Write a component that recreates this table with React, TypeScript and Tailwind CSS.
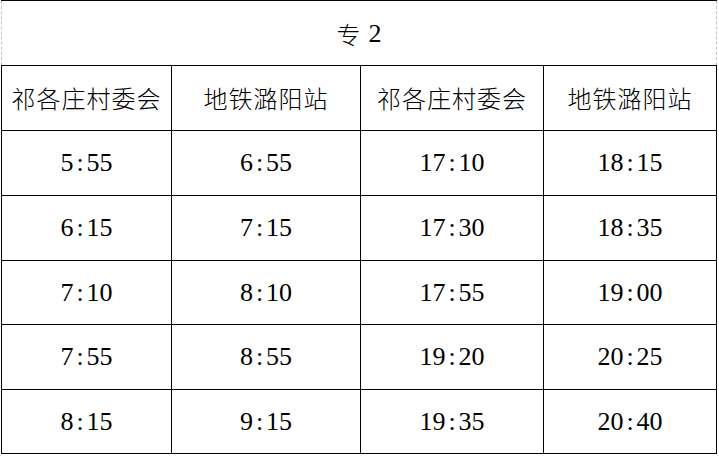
import React from "react";

const rows: string[][] = [
  ["5:55", "6:55", "17:10", "18:15"],
  ["6:15", "7:15", "17:30", "18:35"],
  ["7:10", "8:10", "17:55", "19:00"],
  ["7:55", "8:55", "19:20", "20:25"],
  ["8:15", "9:15", "19:35", "20:40"],
];
const heights = ["h-[64px]", "h-[64px]", "h-[63px]", "h-[64px]", "h-[63px]"];
const heads = ["祁各庄村委会", "地铁潞阳站", "祁各庄村委会", "地铁潞阳站"];

function Time({ t }: { t: string }) {
  const [a, b] = t.split(":");
  return (
    <span className="font-['Liberation_Serif',serif] text-[26px] leading-none text-black">
      {a}
      <span className="mx-[3px]">:</span>
      {b}
    </span>
  );
}

export default function App() {
  return (
    <div className="w-[719px] h-[460px] bg-white">
      <div className="ml-[1px] w-[716px]">
        <div className="border-t border-black">
          <div className="h-[64px] border-x border-dashed border-[#c4c4c4] flex items-center justify-center gap-[8px] pt-[2px]">
            <span className="font-['Noto_Sans_CJK_SC',sans-serif] font-light text-[24px] leading-none text-black">专</span>
            <span className="font-['Liberation_Serif',serif] text-[26px] leading-none text-black">2</span>
          </div>
        </div>
        <div className="grid grid-cols-[169px_188px_182px_172px] gap-px p-px bg-black">
          {heads.map((h, i) => (
            <div key={i} className="h-[64px] bg-white flex items-center justify-center">
              <span className="font-['Noto_Sans_CJK_SC',sans-serif] font-light text-[24px] tracking-[1px] leading-none text-black">{h}</span>
            </div>
          ))}
          {rows.map((r, ri) =>
            r.map((c, ci) => (
              <div key={`${ri}-${ci}`} className={`${heights[ri]} bg-white flex items-center justify-center`}>
                <Time t={c} />
              </div>
            ))
          )}
        </div>
      </div>
    </div>
  );
}
